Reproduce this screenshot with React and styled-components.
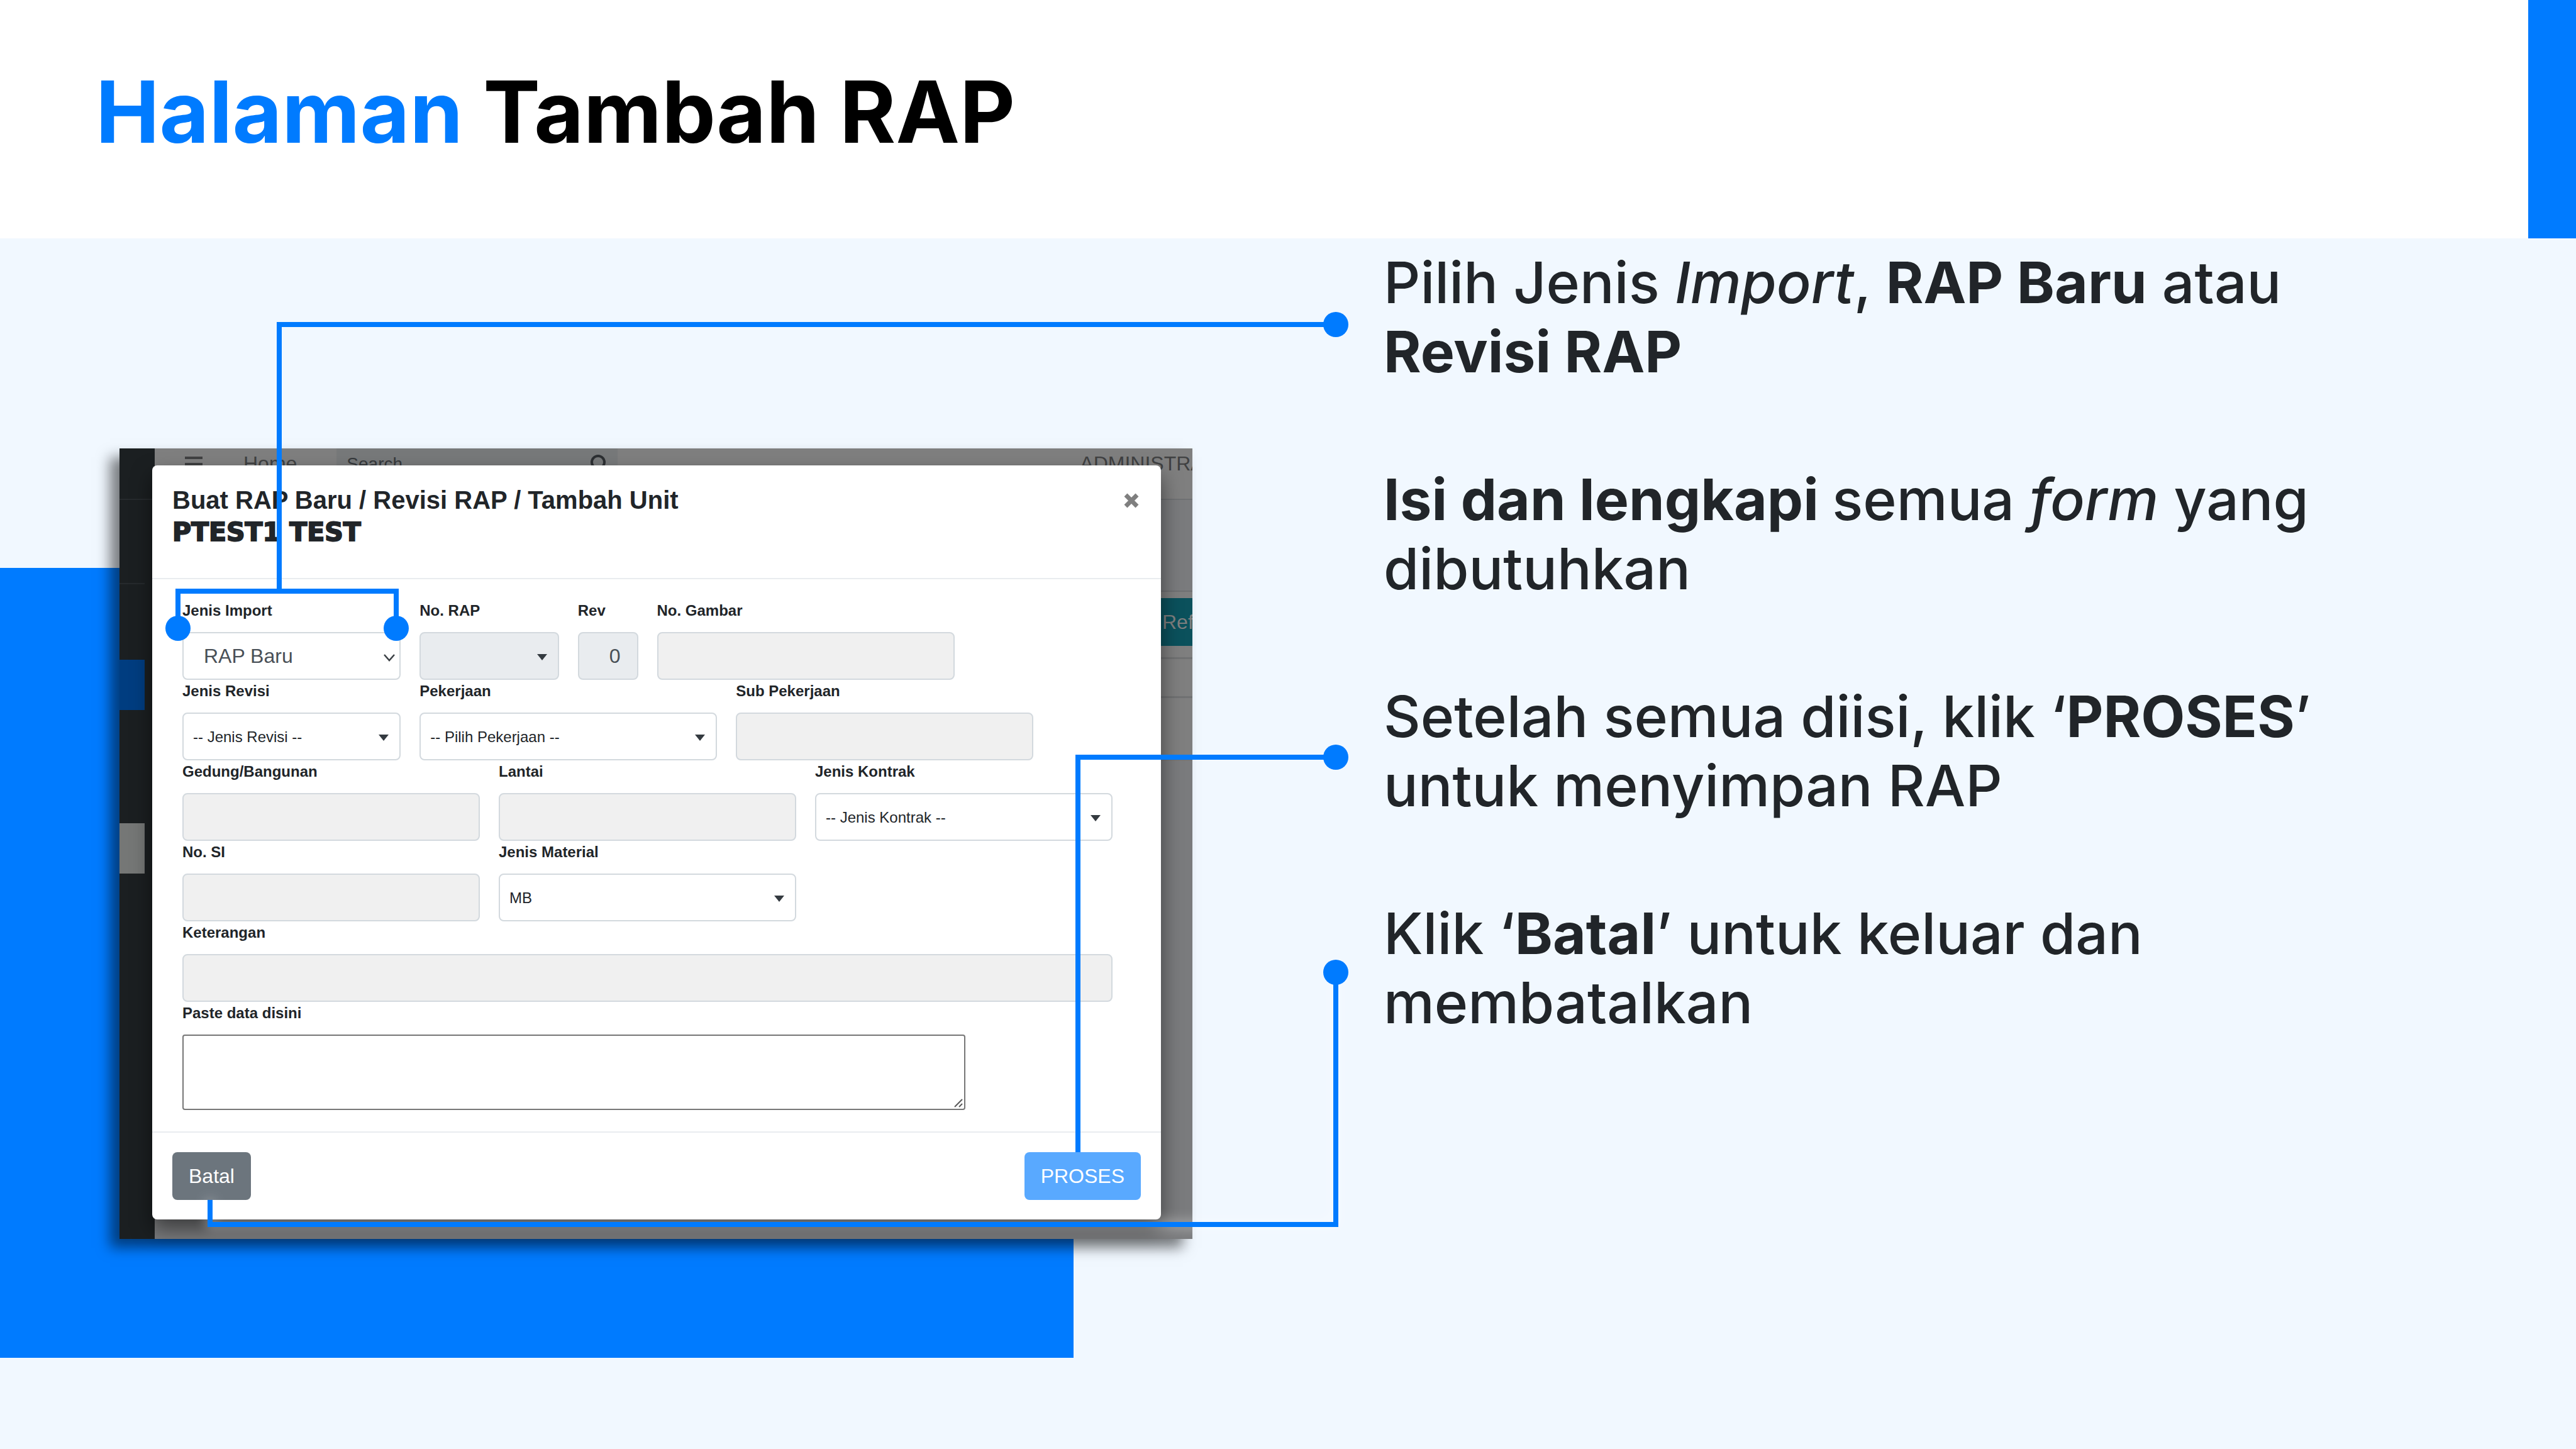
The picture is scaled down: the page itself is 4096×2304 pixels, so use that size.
import React from "react";
import styled, { createGlobalStyle, css } from "styled-components";

const BLUE = "#007bff";
const INK = "#212529";
const SANS = '"Liberation Sans", Arial, sans-serif';
const DISPLAY = 'Inter, "Liberation Sans", sans-serif';

const GlobalStyle = createGlobalStyle`
  *, *::before, *::after { box-sizing: border-box; }
  html, body { margin: 0; padding: 0; }
  body { background: #f1f8ff; font-family: ${SANS}; color: ${INK}; }
  h1, h2, p { margin: 0; }
`;

/* ---------- slide ---------- */

const Slide = styled.div`
  position: relative;
  display: flex;
  flex-direction: column;
  min-height: 100vh;
  overflow: hidden;
  background: #f1f8ff;
`;

const SlideHeader = styled.header`
  display: flex;
  justify-content: space-between;
  height: 379px;
  background: #ffffff;
`;

const SlideTitle = styled.h1`
  padding: 94px 0 0 152px;
  font-family: ${DISPLAY};
  font-size: 136px;
  font-weight: 700;
  line-height: 168px;
  color: #000000;
`;

const Accent = styled.span`
  color: ${BLUE};
`;

const HeaderBar = styled.div`
  width: 76px;
  background: ${BLUE};
`;

const SlideBody = styled.main`
  position: relative;
  flex: 1;
  display: grid;
  grid-template-columns: minmax(0, 1706fr) minmax(0, 1896fr);
  column-gap: 304px;
  align-items: start;
  padding-left: 190px;

  &::before {
    content: "";
    position: absolute;
    left: 0;
    top: 524px;
    width: 1707px;
    height: 1256px;
    background: ${BLUE};
  }
`;

const Steps = styled.div`
  display: flex;
  flex-direction: column;
  gap: 125px;
  max-width: 1600px;
  padding-top: 15px;
  font-family: ${DISPLAY};
  font-size: 91px;
  line-height: 110px;
`;

const Step = styled.p`
  font-weight: 500;

  b { font-weight: 700; }
`;

const Connectors = styled.svg`
  position: absolute;
  left: 0;
  top: 0;
  width: 100%;
  height: auto;
  pointer-events: none;
`;

const GlowPath = styled.path`
  filter: drop-shadow(0 0 10px rgba(255, 255, 255, 0.6));
`;

/* ---------- application behind the dialog ---------- */

const Shot = styled.section`
  position: relative;
  margin-top: 334px;
  padding: 27px 50px 31px 52px;
  background: #7a7b7d;
  box-shadow: -15px 14px 20px rgba(0, 0, 0, 0.5);
`;

const AppLayer = styled.div`
  position: absolute;
  inset: 0;
  display: flex;
  overflow: hidden;
`;

const Sidebar = styled.nav`
  flex: none;
  width: 56px;
  background: #1b1f21;
`;

const Brand = styled.div`
  height: 82px;
  border-bottom: 2px solid #262a2d;
`;

const UserPanel = styled.div`
  width: 40px;
  height: 134px;
  margin-bottom: 120px;
  border-bottom: 2px solid #262a2d;
`;

const MenuItem = styled.div`
  width: 40px;
  height: 80px;
  margin-bottom: 180px;
  background: ${(p) => p.$color};
`;

const Main = styled.div`
  flex: 1;
  min-width: 0;
`;

const Navbar = styled.div`
  display: flex;
  align-items: center;
  height: 82px;
  padding: 0 0 31px 48px;
  background: #7f7f7f;
  border-bottom: 2px solid #6f7173;
  font-size: 32px;
  color: #404142;
  white-space: nowrap;

  > svg { flex: none; }
`;

const NavText = styled.span`
  margin-left: ${(p) => p.$gap}px;
`;

const NavSearch = styled.div`
  flex: none;
  display: flex;
  align-items: center;
  justify-content: space-between;
  width: 447px;
  height: 49px;
  margin-left: 63px;
  padding: 0 12px 0 16px;
  background: #77797a;
  font-size: 28px;
  color: #36393c;
`;

const PageHead = styled.div`
  height: 146px;
  background: #7a7b7d;
  border-bottom: 2px solid #6f7072;
`;

const Card = styled.div`
  height: 268px;
  padding-top: 10px;
  background: #7f7f7f;
  border-bottom: 2px solid #6f7072;
`;

const Refresh = styled.button`
  display: block;
  height: 76px;
  margin: 0 0 18px 1550px;
  padding: 0 52px;
  border: 0;
  background: #0b515c;
  font: 32px ${SANS};
  color: #7f7f7f;
`;

const CardRule = styled.div`
  height: 62px;
  border-top: 3px solid #707172;
`;

/* ---------- dialog ---------- */

const Dialog = styled.form`
  position: relative;
  border-radius: 8px;
  background: #ffffff;
  box-shadow: 0 16px 32px rgba(0, 0, 0, 0.5);
`;

const DialogHeader = styled.div`
  display: flex;
  justify-content: space-between;
  align-items: flex-start;
  height: 181px;
  padding: 30px 34px 30px 32px;
  border-bottom: 2px solid #e9ecef;
`;

const DialogTitle = styled.h2`
  font-size: 40px;
  font-weight: 700;
  line-height: 51px;
`;

const Project = styled.span`
  display: block;
  font-family: "DejaVu Sans", sans-serif;
  font-size: 41px;
  -webkit-text-stroke: 2px ${INK};
`;

const Close = styled.button`
  padding: 0;
  border: 0;
  background: none;
  color: #7f7f7f;

  svg { display: block; }
`;

const Fields = styled.div`
  display: grid;
  grid-template-columns: repeat(12, minmax(0, 1fr));
  column-gap: 30px;
  padding: 32px 77px 34px 48px;
`;

const Cell = styled.div`
  grid-column: ${(p) => (p.$newRow ? "1 / " : "")} span ${(p) => p.$span};
`;

const Label = styled.label`
  display: block;
  margin-bottom: 16px;
  font-size: 24px;
  font-weight: 700;
  line-height: 36px;
  white-space: nowrap;
`;

const Control = styled.div`
  position: relative;
  width: ${(p) => (p.$width ? `${p.$width}px` : "100%")};
  max-width: 100%;
`;

const box = css`
  display: block;
  width: 100%;
  height: 76px;
  margin: 0;
  border: 2px solid #d3d9de;
  border-radius: 8px;
  outline: 0;
  appearance: none;
  font-family: ${SANS};
  opacity: 1;
`;

const Input = styled.input`
  ${box}
  padding: 0 26px;
  background: ${(p) => p.$fill || "#f0f0f0"};
  font-size: 32px;
  text-align: right;
  color: #495057;
`;

const Select = styled.select`
  ${box}
  padding: 0 ${(p) => (p.$large ? 32 : 15)}px;
  background: ${(p) => p.$fill || "#ffffff"};
  font-size: ${(p) => (p.$large ? 32 : 24)}px;
  color: ${(p) => (p.$large ? "#495057" : INK)};
`;

const Caret = styled.svg`
  position: absolute;
  right: ${(p) => p.$right}px;
  top: 35px;
  pointer-events: none;
`;

const Textarea = styled.textarea`
  display: block;
  width: 100%;
  height: 120px;
  margin: 0;
  border: 2px solid #767676;
  border-radius: 4px;
  background: #ffffff;
  resize: none;
  font: 32px ${SANS};
`;

const Grip = styled.svg`
  position: absolute;
  right: 4px;
  bottom: 4px;
`;

const DialogFooter = styled.div`
  display: flex;
  justify-content: space-between;
  padding: 31px 32px;
  border-top: 2px solid #e9ecef;
`;

const Button = styled.button`
  height: 76px;
  padding: 0 26px;
  border: 0;
  border-radius: 8px;
  background: ${(p) => p.$color};
  font: 32px ${SANS};
  color: #ffffff;
`;

function SelectField({ id, text, large, fill }) {
  return (
    <Control>
      <Select id={id} $large={large} $fill={fill} defaultValue={text}>
        <option value={text}>{text}</option>
      </Select>
      {large ? (
        <Caret $right={8} width="20" height="12" viewBox="0 0 20 12" aria-hidden="true">
          <path d="M2 1 L10 10 L18 1" fill="none" stroke="#3b4045" strokeWidth="2.5" />
        </Caret>
      ) : (
        <Caret $right={19} width="16" height="10" viewBox="0 0 16 10" aria-hidden="true">
          <path d="M0 0 H16 L8 10 Z" fill="#343a40" />
        </Caret>
      )}
    </Control>
  );
}

const FIELDS = [
  { id: "import", label: "Jenis Import", span: 3, type: "select", text: "RAP Baru", large: true },
  { id: "norap", label: "No. RAP", span: 2, type: "select", text: "", fill: "#e9ecef" },
  { id: "rev", label: "Rev", span: 1, type: "input", text: "0", fill: "#e9ecef" },
  { id: "gambar", label: "No. Gambar", span: 4, type: "input" },
  { id: "revisi", label: "Jenis Revisi", span: 3, type: "select", text: "-- Jenis Revisi --", newRow: true },
  { id: "pekerjaan", label: "Pekerjaan", span: 4, type: "select", text: "-- Pilih Pekerjaan --" },
  { id: "sub", label: "Sub Pekerjaan", span: 4, type: "input" },
  { id: "gedung", label: "Gedung/Bangunan", span: 4, type: "input", newRow: true },
  { id: "lantai", label: "Lantai", span: 4, type: "input" },
  { id: "kontrak", label: "Jenis Kontrak", span: 4, type: "select", text: "-- Jenis Kontrak --" },
  { id: "nosi", label: "No. SI", span: 4, type: "input", newRow: true },
  { id: "material", label: "Jenis Material", span: 4, type: "select", text: "MB" },
  { id: "keterangan", label: "Keterangan", span: 12, type: "input", newRow: true },
];

function RapDialog() {
  return (
    <Dialog onSubmit={(e) => e.preventDefault()}>
      <DialogHeader>
        <DialogTitle>
          Buat RAP Baru / Revisi RAP / Tambah Unit
          <Project>PTEST1 TEST</Project>
        </DialogTitle>
        <Close type="button" aria-label="Tutup">
          <svg width="26" height="48" viewBox="0 0 26 48" aria-hidden="true">
            <path d="M4 17 L22 35 M22 17 L4 35" stroke="currentColor" strokeWidth="7" />
          </svg>
        </Close>
      </DialogHeader>
      <Fields>
        {FIELDS.map((f) => (
          <Cell key={f.id} $span={f.span} $newRow={f.newRow}>
            <Label htmlFor={f.id}>{f.label}</Label>
            {f.type === "select" ? (
              <SelectField id={f.id} text={f.text} large={f.large} fill={f.fill} />
            ) : (
              <Input id={f.id} type="text" readOnly defaultValue={f.text || ""} $fill={f.fill} />
            )}
          </Cell>
        ))}
        <Cell $span={12} $newRow>
          <Label htmlFor="paste">Paste data disini</Label>
          <Control $width={1245}>
            <Textarea id="paste" />
            <Grip width="14" height="14" viewBox="0 0 14 14" aria-hidden="true">
              <path d="M1 13 L13 1 M8 13 L13 8" stroke="#5a5a5a" strokeWidth="2" />
            </Grip>
          </Control>
        </Cell>
      </Fields>
      <DialogFooter>
        <Button type="button" $color="#6c757d">Batal</Button>
        <Button type="submit" $color="#59a9ff">PROSES</Button>
      </DialogFooter>
    </Dialog>
  );
}

function AppBackdrop() {
  return (
    <AppLayer>
      <Sidebar>
        <Brand />
        <UserPanel />
        <MenuItem $color="#003d80" />
        <MenuItem $color="#757776" />
      </Sidebar>
      <Main>
        <Navbar>
          <svg width="28" height="26" viewBox="0 0 28 26" aria-hidden="true">
            <path d="M0 3 H28 M0 13 H28 M0 23 H28" stroke="#404142" strokeWidth="4" />
          </svg>
          <NavText $gap={65}>Home</NavText>
          <NavSearch>
            Search
            <svg width="32" height="32" viewBox="0 0 32 32" aria-hidden="true">
              <circle cx="13" cy="13" r="10" fill="none" stroke="#2c2f32" strokeWidth="4" />
              <path d="M20 20 L29 29" stroke="#2c2f32" strokeWidth="5" />
            </svg>
          </NavSearch>
          <NavText $gap={735}>ADMINISTRATOR</NavText>
        </Navbar>
        <PageHead />
        <Card>
          <Refresh type="button">Refresh</Refresh>
          <CardRule />
          <CardRule />
        </Card>
      </Main>
    </AppLayer>
  );
}

export default function App() {
  return (
    <>
      <GlobalStyle />
      <Slide>
        <SlideHeader>
          <SlideTitle>
            <Accent>Halaman</Accent> Tambah RAP
          </SlideTitle>
          <HeaderBar />
        </SlideHeader>
        <SlideBody>
          <Shot>
            <AppBackdrop />
            <RapDialog />
          </Shot>
          <Steps>
            <Step>
              Pilih Jenis <i>Import</i>, <b>RAP Baru</b> atau <b>Revisi RAP</b>
            </Step>
            <Step>
              <b>Isi dan lengkapi </b>semua <i>form</i> yang dibutuhkan
            </Step>
            <Step>
              Setelah semua diisi, klik ‘<b>PROSES</b>’ untuk menyimpan RAP
            </Step>
            <Step>
              Klik ‘<b>Batal</b>’ untuk keluar dan membatalkan
            </Step>
          </Steps>
        </SlideBody>
        <Connectors viewBox="0 0 4096 2304" aria-hidden="true">
          <g fill="none" stroke={BLUE} strokeWidth="8">
            <path d="M2124 516 H444 V940" />
            <path d="M283 999 V940 H630 V999" />
            <path d="M2124 1204 H1714 V1832" />
            <GlowPath d="M334 1908 V1947 H2124 V1546" />
          </g>
          <g fill={BLUE}>
            <circle cx="2124" cy="516" r="20" />
            <circle cx="283" cy="999" r="20" />
            <circle cx="630" cy="999" r="20" />
            <circle cx="2124" cy="1204" r="20" />
            <circle cx="2124" cy="1546" r="20" />
          </g>
        </Connectors>
      </Slide>
    </>
  );
}
